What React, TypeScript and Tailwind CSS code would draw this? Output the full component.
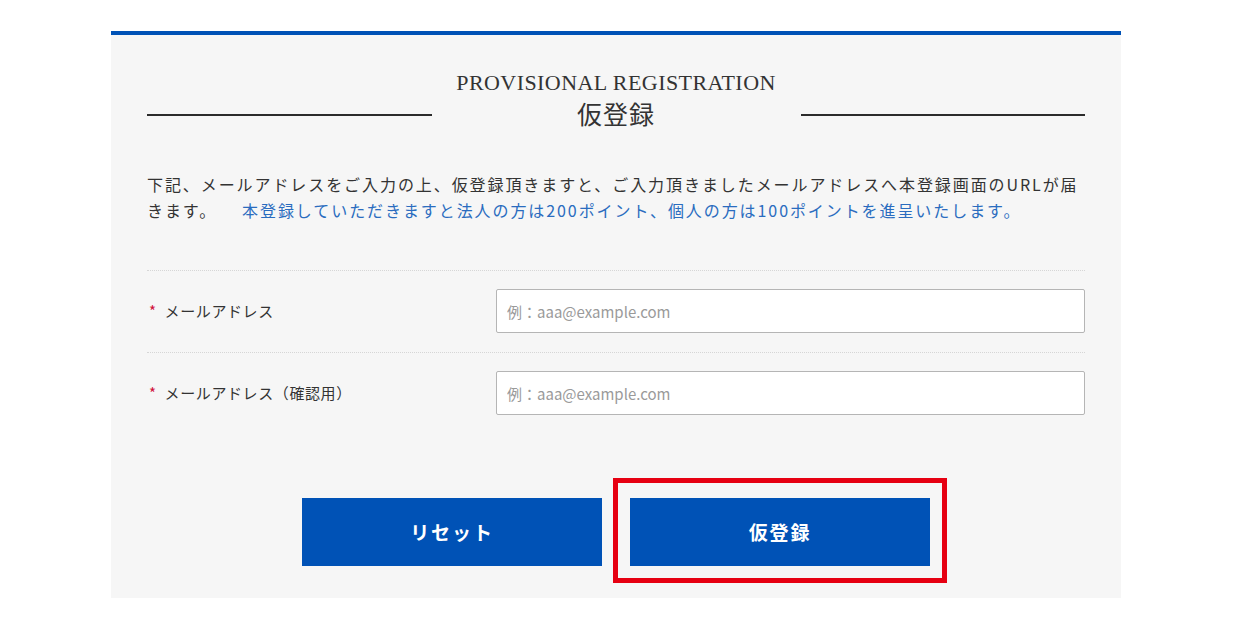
const jp = "font-['Noto_Sans_CJK_JP','Noto_Sans',sans-serif]";

function Field({ label }: { label: string }) {
  return (
    <div className="flex items-center border-t border-dotted border-[#d6d6d6] pt-[18px] pb-[19px]">
      <div className="w-[349px] text-[15px] text-[#333] tracking-[0.04em]">
        <span className="text-[#d0103a] mr-[8px] ml-[2px]">*</span>
        {label}
      </div>
      <input
        type="email"
        placeholder="例：aaa@example.com"
        className="flex-1 h-[44px] border border-[#b5b5b5] rounded-[2px] bg-white px-[10px] text-[15px] text-[#333] placeholder:text-[#9a9a9a] outline-none"
      />
    </div>
  );
}

export default function App() {
  return (
    <div className={`min-h-screen bg-white pt-[31px] ${jp}`}>
      <div className="ml-[111px] w-[1010px] h-[567px] border-t-4 border-[#0052b6] bg-[#f6f6f6] px-[36px] pt-[35px]">
        {/* heading */}
        <div className="flex items-end">
          <div className="flex-1 h-[2px] bg-[#2b2b2b] mb-[14px]" />
          <div className="w-[369px] text-center text-[#333]">
            <p className="font-['Liberation_Serif',serif] text-[22px] leading-[26px] tracking-[0.02em]">
              PROVISIONAL REGISTRATION
            </p>
            <p className="text-[25px] leading-[34px] tracking-[0.04em]">仮登録</p>
          </div>
          <div className="flex-1 h-[2px] bg-[#2b2b2b] mb-[14px]" />
        </div>

        <p className="mt-[41px] text-[16px] leading-[26px] tracking-[0.12em] text-[#333]">
          下記、メールアドレスをご入力の上、仮登録頂きますと、ご入力頂きましたメールアドレスへ本登録画面のURLが届きます。
          <span className="ml-[25px] text-[#2a6cbf]">
            本登録していただきますと法人の方は200ポイント、個人の方は100ポイントを進呈いたします。
          </span>
        </p>

        <div className="mt-[47px]">
          <Field label="メールアドレス" />
          <Field label="メールアドレス（確認用）" />
        </div>

        <div className="mt-[64px] flex justify-center gap-[28px]">
          <button className="w-[300px] h-[68px] bg-[#0052b6] text-white text-[19px] font-bold tracking-[0.1em]">
            リセット
          </button>
          <div className="relative">
            <button className="w-[300px] h-[68px] bg-[#0052b6] text-white text-[19px] font-bold tracking-[0.1em]">
              仮登録
            </button>
            <div className="absolute -left-[17px] -right-[17px] -top-[20px] -bottom-[17px] border-[5px] border-[#e60012] pointer-events-none" />
          </div>
        </div>
      </div>
    </div>
  );
}
